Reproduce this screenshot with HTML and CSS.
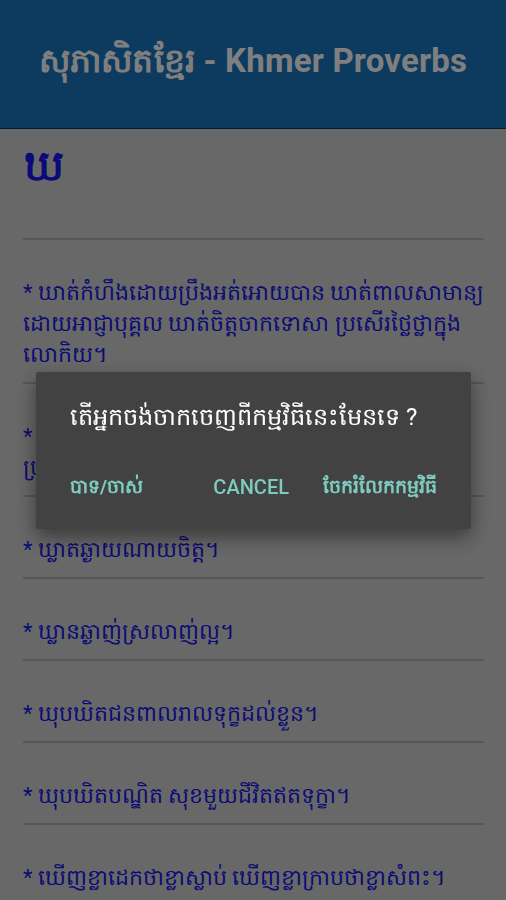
FILE: index.html
```html
<!DOCTYPE html>
<html lang="km">
<head>
  <meta charset="UTF-8">
  <meta name="viewport" content="width=device-width, initial-scale=1.0">
  <title>សុភាសិតខ្មែរ - Khmer Proverbs</title>
  <link rel="stylesheet" href="styles.css">
</head>
<body>
  <header class="app-bar">
    <h1>សុភាសិតខ្មែរ - Khmer Proverbs</h1>
  </header>
  <main class="content">
    <div class="letter">ឃ</div>
    <ul class="proverbs">
      <li>* ឃាត់កំហឹងដោយប្រឹងអត់អោយបាន ឃាត់ពាលសាមាន្យ<br>ដោយអាជ្ញាបុគ្គល ឃាត់ចិត្តចាកទោសា ប្រសើរថ្លៃថ្លាក្នុង<br>លោកិយ។</li>
      <li>* ឃាត់ចិត្តខ្លួនឯងដោយខ្លួនឯង<br>ប្រសើរជាងឈ្នះខ្មាំងមួយពាន់។</li>
      <li>* ឃ្លាតឆ្ងាយណាយចិត្ត។</li>
      <li>* ឃ្លានឆ្ងាញ់ស្រលាញ់ល្អ។</li>
      <li>* ឃុបឃិតជនពាលរាលទុក្ខដល់ខ្លួន។</li>
      <li>* ឃុបឃិតបណ្ឌិត សុខមួយជីវិតឥតទុក្ខា។</li>
      <li>* ឃើញខ្លាដេកថាខ្លាស្លាប់ ឃើញខ្លាក្រាបថាខ្លាសំពះ។</li>
    </ul>
  </main>

  <!-- dialog ចាកចេញ -->
  <div class="scrim">
    <div class="dialog">
      <p class="dialog-text">តើអ្នកចង់ចាកចេញពីកម្មវិធីនេះមែនទេ ?</p>
      <div class="dialog-actions">
        <button class="btn">បាទ/ចាស់</button>
        <div class="right-actions">
          <button class="btn btn-cancel">CANCEL</button>
          <button class="btn">ចែករំលែកកម្មវិធី</button>
        </div>
      </div>
    </div>
  </div>
</body>
</html>
```

FILE: styles.css
```css
body {
  margin: 0;
  font-family: Roboto, "Noto Sans", "DejaVu Sans", sans-serif;
  background: #d0d0d0;
  height: 900px;
  overflow: hidden;
}

.app-bar {
  background: #1a74be;
  height: 129px;
  display: flex;
  align-items: center;
  justify-content: center;
  border-bottom: 1px solid #0d3a5f;
  box-sizing: border-box;
}

.app-bar h1 {
  margin: 0;
  font-size: 33px;
  font-weight: bold;
  color: #ffffff;
  letter-spacing: 0.2px;
}

.content {
  padding: 0 22px 0 23px;
}

.letter {
  font-size: 42px;
  font-weight: bold;
  color: #1616f0;
  height: 111px;
  padding-top: 15px;
  padding-left: 1px;
  box-sizing: border-box;
  line-height: 44px;
  border-bottom: 2px solid #aeaeae;
}

.proverbs {
  list-style: none;
  margin: 0;
  padding: 0;
}

.proverbs li {
  padding: 37px 0 12px;
  line-height: 31px;
  font-size: 22px;
  color: #1818e8;
  white-space: nowrap;
  border-bottom: 2px solid #aeaeae;
}

.scrim {
  position: fixed;
  inset: 0;
  background: rgba(0, 0, 0, 0.5);
}

.dialog {
  position: absolute;
  left: 36px;
  top: 372px;
  width: 435px;
  height: 157px;
  box-sizing: border-box;
  background: #424242;
  border-radius: 2px;
  padding: 28px 34px 0;
  box-shadow: 0 8px 20px rgba(0, 0, 0, 0.45);
}

.dialog-text {
  margin: 0;
  color: #fff;
  font-size: 24px;
  line-height: 34px;
}

.dialog-actions {
  display: flex;
  justify-content: space-between;
  align-items: center;
  margin-top: 41px;
}

.right-actions {
  display: flex;
  gap: 34px;
}

.btn {
  background: none;
  border: none;
  padding: 0;
  font-family: inherit;
  font-size: 19px;
  line-height: 24px;
  font-weight: bold;
  color: #7ecbbf;
}

.btn-cancel {
  font-weight: 500;
  font-size: 20px;
}
```
